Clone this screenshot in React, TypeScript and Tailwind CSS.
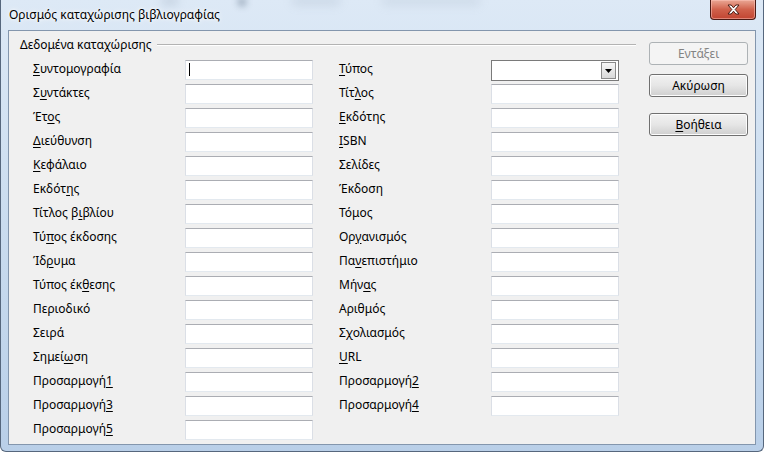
import React from 'react';

type Label = { pre: string; key?: string; post?: string };

const leftRows: Label[] = [
  { pre: '', key: 'Σ', post: 'υντομογραφία' },
  { pre: 'Σ', key: 'υ', post: 'ντάκτες' },
  { pre: 'Έτ', key: 'ο', post: 'ς' },
  { pre: '', key: 'Δ', post: 'ιεύθυνση' },
  { pre: '', key: 'Κ', post: 'εφάλαιο' },
  { pre: 'Εκδότ', key: 'η', post: 'ς' },
  { pre: 'Τίτλος β', key: 'ι', post: 'βλίου' },
  { pre: 'Τύ', key: 'π', post: 'ος έκδοσης' },
  { pre: 'Ίδ', key: 'ρ', post: 'υμα' },
  { pre: 'Τύπος έκ', key: 'θ', post: 'εσης' },
  { pre: 'Περιοδικό' },
  { pre: 'Σειρά' },
  { pre: 'Σημεί', key: 'ω', post: 'ση' },
  { pre: 'Προσαρμογή', key: '1' },
  { pre: 'Προσαρμογή', key: '3' },
  { pre: 'Προσαρμογή', key: '5' },
];

const rightRows: Label[] = [
  { pre: '', key: 'Τ', post: 'ύπος' },
  { pre: 'Τίτ', key: 'λ', post: 'ος' },
  { pre: '', key: 'Ε', post: 'κδότης' },
  { pre: '', key: 'I', post: 'SBN' },
  { pre: 'Σελίδες' },
  { pre: 'Έκδοση' },
  { pre: 'Τόμος' },
  { pre: 'Ορ', key: 'γ', post: 'ανισμός' },
  { pre: 'Πα', key: 'ν', post: 'επιστήμιο' },
  { pre: 'Μήν', key: 'α', post: 'ς' },
  { pre: 'Αριθμός' },
  { pre: 'Σχολιασμός' },
  { pre: '', key: 'U', post: 'RL' },
  { pre: 'Προσαρμογή', key: '2' },
  { pre: 'Προσαρμογή', key: '4' },
];

const Text: React.FC<{ l: Label }> = ({ l }) => (
  <span className="whitespace-nowrap">
    {l.pre}
    {l.key && <u className="underline decoration-1 underline-offset-2">{l.key}</u>}
    {l.post}
  </span>
);

const Field: React.FC<{ caret?: boolean }> = ({ caret }) => (
  <div className="relative h-[20px] w-[128px] bg-white border border-t-[#abadb3] border-l-[#dbdfe6] border-r-[#dbdfe6] border-b-[#e3e9ef]">
    {caret && <div className="absolute left-[3px] top-[2px] h-[13px] w-px bg-black" />}
  </div>
);

const Combo: React.FC = () => (
  <div className="flex h-[21px] w-[128px] items-center justify-end bg-white border border-[#7a7a7a] pr-[2px]">
    <div className="flex h-[17px] w-[15px] items-center justify-center border border-[#8a8a8a] bg-gradient-to-b from-[#f6f6f6] to-[#d8d8d8]">
      <svg width="7" height="4" viewBox="0 0 7 4">
        <path d="M0 0h7L3.5 4z" fill="#000" />
      </svg>
    </div>
  </div>
);

const Btn: React.FC<{ children: React.ReactNode; disabled?: boolean; className?: string }> = ({ children, disabled, className }) =>
  disabled ? (
    <div className={`flex h-[23px] w-[99px] items-center justify-center rounded-[3px] border border-[#adb2b5] bg-[#f4f4f4] text-[#838383] ${className ?? ''}`}>
      {children}
    </div>
  ) : (
    <div className={`flex h-[23px] w-[99px] items-center justify-center rounded-[3px] border border-[#707070] bg-gradient-to-b from-[#f2f2f2] via-[#e6e6e6] to-[#cfcfcf] shadow-[inset_0_0_0_1px_#fcfcfc] text-black ${className ?? ''}`}>
      {children}
    </div>
  );

export default function App() {
  const rows = leftRows.map((l, i) => ({ l, r: rightRows[i] }));
  return (
    <div
      className="relative h-[452px] w-[764px] overflow-hidden rounded-b-[6px] border border-t-0 border-[#56677d] bg-gradient-to-b from-[#dde9f6] via-[#cadcef] to-[#b9cfe8] text-[12px] text-black"
      style={{ fontFamily: '"Segoe UI", "Noto Sans", "DejaVu Sans", sans-serif' }}
    >
      {/* blurred glass blobs behind title bar */}
      <div className="absolute left-[160px] top-[-4px] h-[10px] w-[18px] rounded-full bg-[#8d9db0] opacity-25 blur-[4px]" />
      <div className="absolute left-[236px] top-[-3px] h-[10px] w-[10px] rounded-full bg-[#5d6f86] opacity-40 blur-[3px]" />
      <div className="absolute left-[290px] top-[-4px] h-[10px] w-[50px] rounded-full bg-[#8f9eb1] opacity-20 blur-[5px]" />
      <div className="absolute left-[380px] top-[-4px] h-[10px] w-[100px] rounded-full bg-[#9aa9bb] opacity-20 blur-[5px]" />

      {/* title bar */}
      <div className="relative flex h-[30px] items-center pl-[8px]">
        <span className="pb-[1px] [text-shadow:0_0_6px_#ffffff,0_0_3px_#ffffff]">Ορισμός καταχώρισης βιβλιογραφίας</span>
        <div className="absolute right-[7px] top-0 flex h-[20px] w-[46px] items-center justify-center rounded-b-[4px] border border-t-0 border-[#4a1a14] bg-gradient-to-b from-[#e9a795] via-[#d0614b] to-[#c24431] shadow-[inset_0_0_0_1px_rgba(255,200,190,0.5)]">
          <svg width="13" height="11" viewBox="0 0 13 11">
            <path
              d="M1 1h3.2L6.5 3.8 8.8 1H12L8.2 5.5 12 10H8.8L6.5 7.2 4.2 10H1l3.8-4.5z"
              fill="#fff"
              stroke="#4b1c14"
              strokeWidth="1"
              strokeLinejoin="round"
            />
          </svg>
        </div>
      </div>

      {/* client area */}
      <div className="mx-[7px] flex h-[415px] overflow-hidden border border-[#8396ad] bg-[#f0f0f0]">
        <div className="w-[627px] pl-[11px] pt-[6px]">
          <div className="flex h-[16px] items-center">
            <span className="whitespace-nowrap">Δεδομένα καταχώρισης</span>
            <div className="ml-[5px] h-[2px] flex-1 border-t border-b border-t-[#b3b3b3] border-b-white" />
          </div>
          <div className="mt-[7px] grid grid-cols-[152px_128px_178px_128px] gap-y-[4px] pl-[13px]">
            {rows.map(({ l, r }, i) => (
              <React.Fragment key={i}>
                <div className="flex h-[20px] items-center pb-[3px]">
                  <Text l={l} />
                </div>
                <Field caret={i === 0} />
                <div className="flex h-[20px] items-center pb-[3px] pl-[26px]">{r && <Text l={r} />}</div>
                <div className="h-[20px]">{r && (i === 0 ? <Combo /> : <Field />)}</div>
              </React.Fragment>
            ))}
          </div>
        </div>

        <div className="ml-[13px] flex flex-col pt-[11px]">
          <Btn disabled>Εντάξει</Btn>
          <Btn className="mt-[9px]">Ακύρωση</Btn>
          <Btn className="mt-[16px]">
            <Text l={{ pre: '', key: 'Β', post: 'οήθεια' }} />
          </Btn>
        </div>
      </div>
    </div>
  );
}
